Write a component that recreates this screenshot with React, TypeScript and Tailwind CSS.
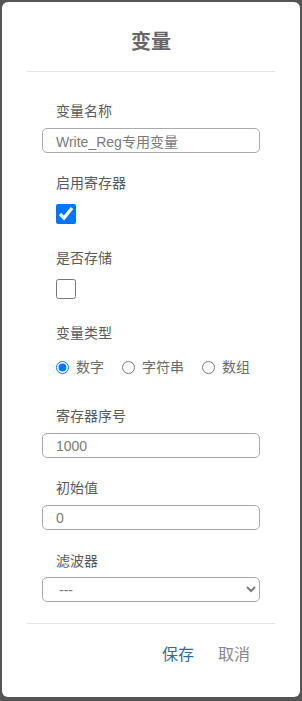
import React from "react";

const font = { fontFamily: '"Liberation Sans", "Noto Sans CJK SC", sans-serif' };

function Label({ children, className = "" }: { children: React.ReactNode; className?: string }) {
  return <div className={"pl-[14px] text-[14px] leading-[20px] text-[#5a5a5a] " + className}>{children}</div>;
}

function TextInput({ value, className = "" }: { value: string; className?: string }) {
  return (
    <input
      readOnly
      defaultValue={value}
      className={
        "block w-[218px] h-[25px] rounded-[5px] border border-[#aaa] bg-white pl-[13px] text-[14px] text-[#7a7a7a] outline-none " +
        className
      }
      style={font}
    />
  );
}

export default function App() {
  return (
    <div className="h-[701px] w-[302px] bg-[#555] pt-[2px] px-[2px] flex" style={font}>
      <div className="w-[298px] h-[695px] bg-white rounded-[6px] flex flex-col">
        <div className="mx-[25px] pt-[26px] pb-[15px] border-b border-[#e5e5e5] text-center text-[20px] leading-[28px] font-bold text-[#666]">
          变量
        </div>
        <div className="pl-[40px] flex flex-col">
          <Label className="mt-[29px]">变量名称</Label>
          <TextInput value="Write_Reg专用变量" className="mt-[7px]" />
          <Label className="mt-[20px]">启用寄存器</Label>
          <div className="pl-[14px] mt-[11px] h-[20px]">
            <input type="checkbox" defaultChecked className="block w-[20px] h-[20px] m-0 accent-[#0075ff]" />
          </div>
          <Label className="mt-[24px]">是否存储</Label>
          <div className="pl-[14px] mt-[11px] h-[20px]">
            <input type="checkbox" className="block w-[20px] h-[20px] m-0 accent-[#0075ff]" />
          </div>
          <Label className="mt-[24px]">变量类型</Label>
          <div className="pl-[14px] mt-[14px] flex items-center h-[20px] text-[14px] text-[#6a6a6a]">
            <input type="radio" name="t" defaultChecked className="block w-[13px] h-[13px] m-0 accent-[#0075ff]" />
            <span className="ml-[7px]">数字</span>
            <input type="radio" name="t" className="block w-[13px] h-[13px] m-0 ml-[18px]" />
            <span className="ml-[7px]">字符串</span>
            <input type="radio" name="t" className="block w-[13px] h-[13px] m-0 ml-[18px]" />
            <span className="ml-[7px]">数组</span>
          </div>
          <Label className="mt-[29px]">寄存器序号</Label>
          <TextInput value="1000" className="mt-[7px]" />
          <Label className="mt-[20px]">初始值</Label>
          <TextInput value="0" className="mt-[7px]" />
          <Label className="mt-[21px]">滤波器</Label>
          <select
            className="block mt-[6px] w-[218px] h-[25px] rounded-[5px] border border-[#aaa] bg-white pl-[12px] text-[14px] text-[#7a7a7a] outline-none"
            style={font}
            defaultValue="-"
          >
            <option value="-">---</option>
          </select>
        </div>
        <div className="mx-[25px] mt-[21px] border-t border-[#e5e5e5] flex justify-end pr-[25px] pt-[20px] text-[16px] leading-[22px]">
          <span className="text-[#336a99]">保存</span>
          <span className="ml-[24px] text-[#888]">取消</span>
        </div>
      </div>
    </div>
  );
}
